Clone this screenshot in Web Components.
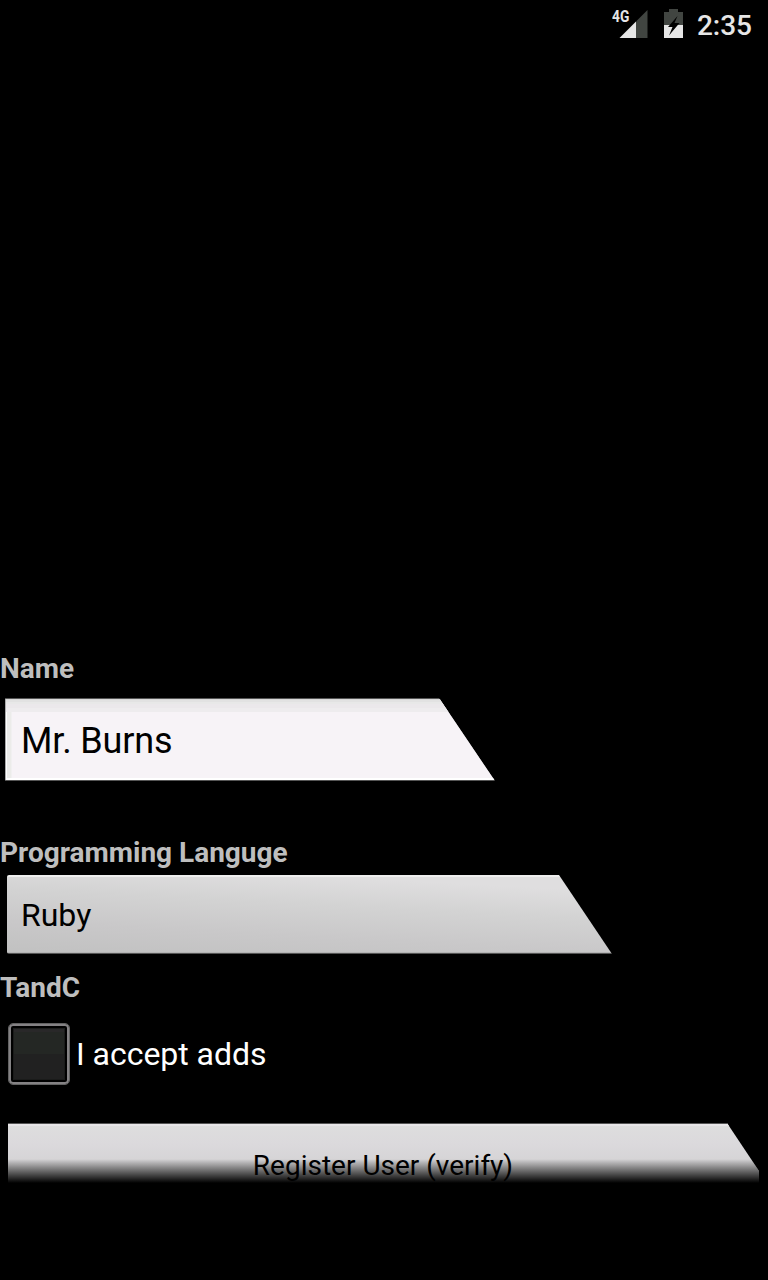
<!DOCTYPE html>
<html lang="en">
<head>
<meta charset="utf-8">
<title>Register User</title>
<style>
html, body { margin: 0; background: #000; }
body { width: 768px; height: 1280px; overflow: hidden; font-family: Roboto, "Liberation Sans", sans-serif; }
</style>
</head>
<body>
<register-screen></register-screen>
<script>
const define = (name, markup) => {
  const template = document.createElement('template');
  template.innerHTML = markup;
  customElements.define(name, class extends HTMLElement {
    constructor() {
      super();
      this.attachShadow({ mode: 'open' }).append(template.content.cloneNode(true));
    }
  });
};

define('signal-icon', `
  <style>
    :host { display: block; position: relative; width: 36px; height: 29px; }
    svg { display: block; }
    span { position: absolute; left: 0; top: 0; font: 700 16px/16px Roboto, sans-serif; color: #e6e6e6;
      transform: scaleX(.86); transform-origin: 0 0; }
  </style>
  <svg width="36" height="29" viewBox="0 0 36 29">
    <path d="M35.5 1V29.5H24V12.5Z" fill="#414541"/>
    <path d="M24 12.5V29.5H7Z" fill="#e6e6e6"/>
  </svg>
  <span>4G</span>`);

define('battery-icon', `
  <style>:host { display: block; width: 19px; height: 29px; } svg { display: block; }</style>
  <svg width="19" height="29" viewBox="0 0 19 29">
    <path d="M5 0H14V3H19V16H0V3H5Z" fill="#414541"/>
    <path d="M0 16H19V29H0Z" fill="#e6e6e6"/>
    <path d="M13.5 7L4 18H8.5L5 26.5L15.5 14H10.5Z" fill="#000"/>
  </svg>`);

define('status-bar', `
  <style>
    :host { display: flex; justify-content: flex-end; align-items: flex-start; height: 50px; box-sizing: border-box;
      padding: 9px 16px 0 0; color: #e6e6e6; }
    battery-icon { margin: 0 14px 0 16px; }
    time { font: 500 28px/33px Roboto, sans-serif; }
  </style>
  <signal-icon></signal-icon><battery-icon></battery-icon><time>2:35</time>`);

define('field-label', `
  <style>:host { display: block; height: 33px; font: 700 28px/33px Roboto, sans-serif; color: #bebebe; white-space: nowrap; }</style>
  <slot></slot>`);

define('text-field', `
  <style>
    :host { display: block; width: 490px; height: 83px; margin-left: 5px; box-sizing: border-box; padding: 1px 0 1px 1px;
      background: linear-gradient(#555 0 1px, #aaa 1px 82px, #555 82px);
      clip-path: polygon(0 0, 434px 0, 490px 83px, 0 83px); }
    div { height: 81px; box-sizing: border-box; padding: 21px 0 0 15px; font: 36px/42px Roboto, sans-serif; letter-spacing: -.15px; color: #000;
      background:
        linear-gradient(#fff, #fff) 0 79px / 100% 2px no-repeat,
        linear-gradient(#d8d8d8 0 1px, #e2e2e2 1px 3px, #e8e8e8 3px 5px, #ebe8eb 5px 9px, #eeecee 9px) 0 0 / 100% 13px no-repeat,
        linear-gradient(90deg, #fff 0 1px, #ececea 1px 5px, #f1f0f1 5px 6px, #f7f3f7 6px); }
  </style>
  <div><slot></slot></div>`);

define('spinner-field', `
  <style>
    :host { display: block; width: 605px; height: 79px; margin-left: 7px; box-sizing: border-box; padding: 21px 0 0 14px;
      font: 32px/38px Roboto, sans-serif; color: #000; border-radius: 2px 0 0 2px;
      background:
        linear-gradient(#eee, #eee) 0 0 / 100% 2px no-repeat,
        linear-gradient(#b5b5b5, #b5b5b5) 0 77px / 100% 1px no-repeat,
        linear-gradient(#555, #555) 0 78px / 100% 1px no-repeat,
        linear-gradient(3deg, #c2c2c2 5%, #c9c8c9 30%, #d3d3d3 60%, #dfdedf 85%);
      clip-path: polygon(0 0, 552px 0, 605px 79px, 0 79px); }
  </style>
  <slot></slot>`);

define('check-option', `
  <style>
    :host { display: flex; align-items: center; height: 62px; padding-left: 8px; gap: 6px; color: #fff;
      font: 32px/38px Roboto, sans-serif; letter-spacing: -.03px; }
    i { width: 62px; height: 62px; box-sizing: border-box; border: 1px solid #626262; border-radius: 5px; padding: 4px;
      background: #000; box-shadow: inset 0 0 0 2px #848284; }
    b { display: block; height: 52px; box-sizing: border-box; border: 1px solid #1a1b1a;
      background: linear-gradient(#292829 0 3px, #242724 3px 25px, #212121 25px); }
  </style>
  <i><b></b></i><span><slot></slot></span>`);

define('register-button', `
  <style>
    :host { display: block; width: 752px; height: 60px; margin-left: 8px; box-sizing: border-box; padding: 26px 2px 0 0; overflow: hidden;
      text-align: center; font: 28px/33px Roboto, sans-serif; color: #000; position: relative;
      background:
        linear-gradient(#555, #555) 0 0 / 100% 1px no-repeat,
        linear-gradient(#e8e6e8, #e8e6e8) 0 1px / 100% 2px no-repeat,
        linear-gradient(#dedede, #dbd9dc 35%, #cecece);
      clip-path: polygon(0 0, 719px 0, 751px 48px, 751px 60px, 0 60px); }
    div { position: absolute; inset: auto 0 0 0; height: 24px; background: linear-gradient(transparent, #000); }
  </style>
  <slot></slot><div></div>`);

define('register-screen', `
  <style>
    :host { display: flex; flex-direction: column; width: 768px; height: 1280px; background: #000; }
    main { padding-top: 602px; }
    text-field { margin-top: 13px; }
    .language { margin-top: 55px; }
    spinner-field { margin-top: 6px; }
    .terms { margin-top: 17px; }
    check-option { margin-top: 19px; }
    register-button { margin-top: 38px; }
  </style>
  <status-bar></status-bar>
  <main>
    <field-label>Name</field-label>
    <text-field>Mr. Burns</text-field>
    <field-label class="language">Programming Languge</field-label>
    <spinner-field>Ruby</spinner-field>
    <field-label class="terms">TandC</field-label>
    <check-option>I accept adds</check-option>
    <register-button>Register User (verify)</register-button>
  </main>`);
</script>
</body>
</html>
